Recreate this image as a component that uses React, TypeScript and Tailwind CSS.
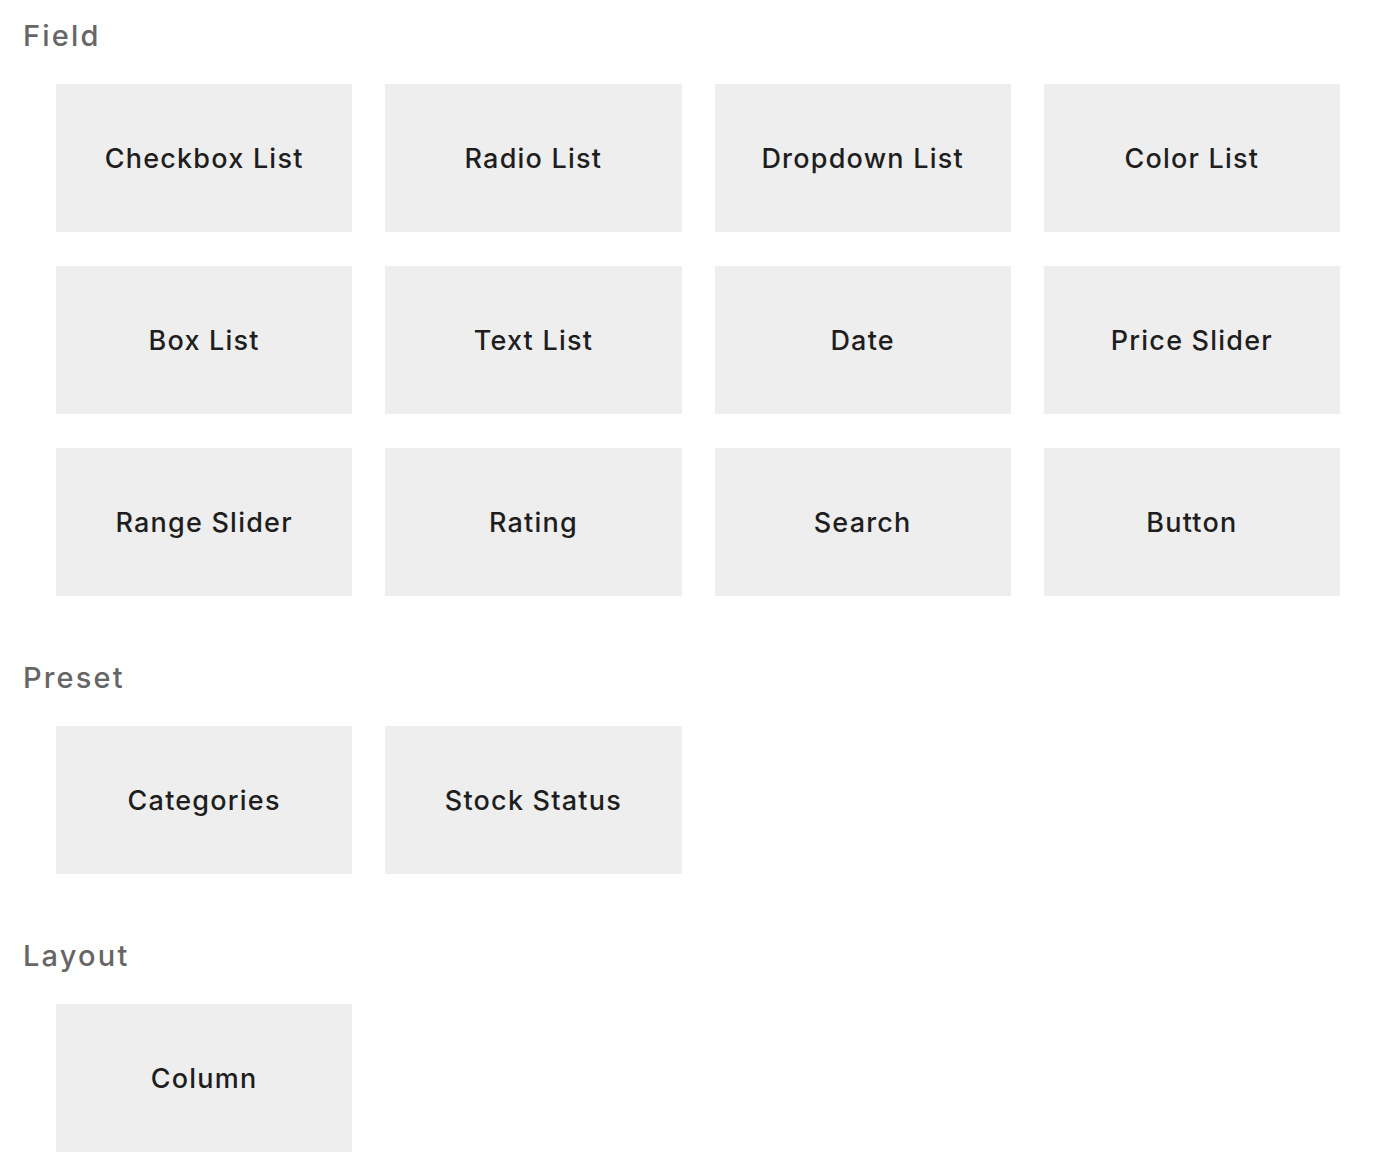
import React from "react";

// khối nút trong mỗi nhóm
const groups: { title: string; items: string[] }[] = [
  {
    title: "Field",
    items: [
      "Checkbox List",
      "Radio List",
      "Dropdown List",
      "Color List",
      "Box List",
      "Text List",
      "Date",
      "Price Slider",
      "Range Slider",
      "Rating",
      "Search",
      "Button",
    ],
  },
  { title: "Preset", items: ["Categories", "Stock Status"] },
  { title: "Layout", items: ["Column"] },
];

const App: React.FC = () => {
  return (
    <div
      className="min-h-[1176px] w-[1400px] bg-white pt-4"
      style={{ fontFamily: "Inter, 'Noto Sans', sans-serif" }}
    >
      {groups.map((g) => (
        <section key={g.title} className="mb-[62px]">
          <h2 className="pl-[23px] h-10 leading-10 text-[29px] font-medium tracking-[0.075em] text-[#666666]">
            {g.title}
          </h2>
          <div className="mt-7 ml-14 grid w-[1284px] grid-cols-4 gap-x-[33px] gap-y-[34px]">
            {g.items.map((item) => (
              <div
                key={item}
                className="flex h-[148px] items-center justify-center bg-[#eeeeee] pt-0.5 text-[27px] font-medium tracking-[0.045em] text-[#1e1e1e]"
              >
                {item}
              </div>
            ))}
          </div>
        </section>
      ))}
    </div>
  );
};

export default App;
